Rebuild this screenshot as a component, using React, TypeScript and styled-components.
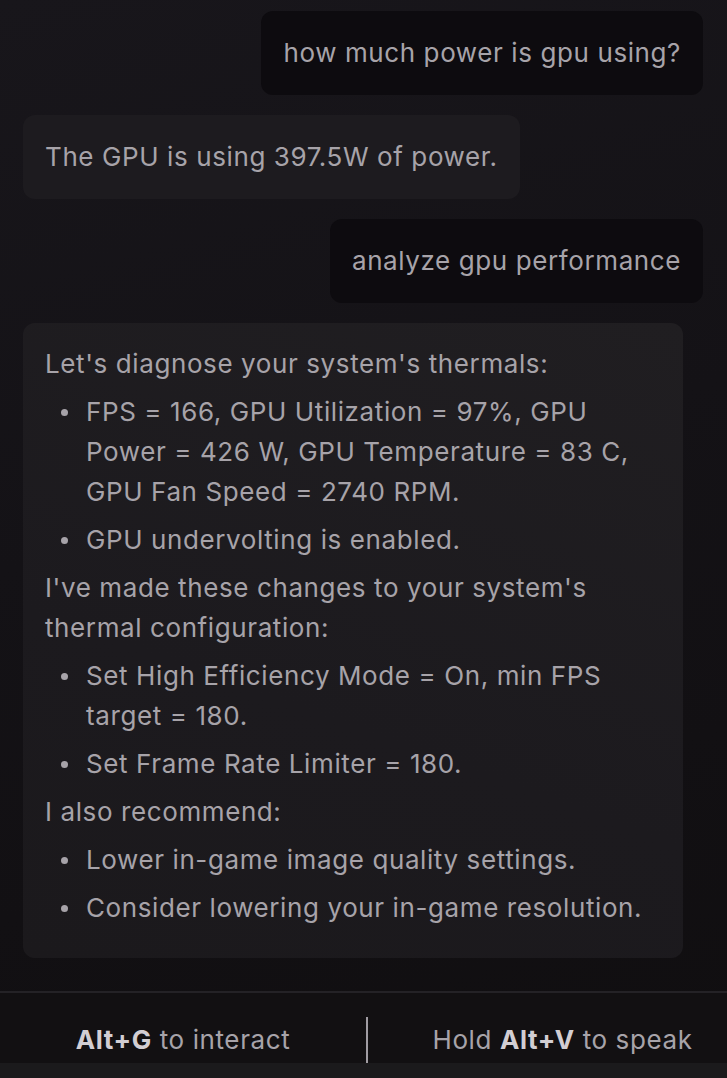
import React from "react";
import styled, { createGlobalStyle } from "styled-components";

const Global = createGlobalStyle`
  html, body { margin: 0; padding: 0; background: #121014; }
  body { font-family: Inter, "Noto Sans", "Liberation Sans", sans-serif; }
  * { box-sizing: border-box; }
`;

const Page = styled.div`
  width: 727px;
  height: 1078px;
  display: flex;
  flex-direction: column;
  background: linear-gradient(165deg, #18161b 0%, #141216 45%, #100e10 100%);
  overflow: hidden;
  letter-spacing: 0.6px;
`;

const Thread = styled.div`
  flex: 1;
  display: flex;
  flex-direction: column;
  gap: 20px;
  padding: 11px 24px 0 23px;
`;

const Bubble = styled.div<{ $user?: boolean }>`
  align-self: ${(p) => (p.$user ? "flex-end" : "flex-start")};
  max-width: 660px;
  padding: 22px 22px;
  border-radius: 12px;
  background: ${(p) => (p.$user ? "#0d0b0f" : "#1d1b1f")};
  color: #a7a3a9;
  font-size: 26px;
  line-height: 40px;
`;

const Answer = styled(Bubble)`
  width: 660px;
  padding: 21px 22px 22px 22px;
  background: linear-gradient(200deg, #201e21 0%, #1c1a1e 60%, #1b191c 100%);
`;

const Para = styled.p`
  margin: 0 0 8px 0;
`;

const List = styled.ul`
  list-style: none;
  margin: 0 0 8px 0;
  padding: 0 0 0 41px;
`;

const Item = styled.li`
  position: relative;
  margin: 0 0 8px 0;
  &::before {
    content: "";
    position: absolute;
    left: -25px;
    top: 17px;
    width: 7px;
    height: 7px;
    border-radius: 50%;
    background: #a7a3a9;
  }
`;

const Footer = styled.div`
  height: 72px;
  border-top: 2px solid #242226;
  background: #121012;
  display: grid;
  grid-template-columns: 366px 2px 1fr;
  align-items: stretch;
  color: #a7a3a9;
  font-size: 26px;
`;

const Hint = styled.div<{ $shift?: number }>`
  display: flex;
  align-items: center;
  justify-content: center;
  padding-top: 22px;
  padding-left: ${(p) => p.$shift ?? 0}px;
`;

const Key = styled.b`
  font-weight: 700;
  color: #d2ced3;
`;

const Divider = styled.div`
  margin-top: 24px;
  background: #a09ca2;
`;

const BottomStrip = styled.div`
  height: 15px;
  background: #1b1a1c;
`;

export default function App() {
  return (
    <Page>
      <Global />
      <Thread>
        <Bubble $user>how much power is gpu using?</Bubble>
        <Bubble>The GPU is using 397.5W of power.</Bubble>
        <Bubble $user>analyze gpu performance</Bubble>
        <Answer>
          <Para>Let's diagnose your system's thermals:</Para>
          <List>
            <Item>
              FPS = 166, GPU Utilization = 97%, GPU Power = 426 W, GPU Temperature = 83 C, GPU Fan
              Speed = 2740 RPM.
            </Item>
            <Item>GPU undervolting is enabled.</Item>
          </List>
          <Para>I've made these changes to your system's thermal configuration:</Para>
          <List>
            <Item>Set High Efficiency Mode = On, min FPS target = 180.</Item>
            <Item>Set Frame Rate Limiter = 180.</Item>
          </List>
          <Para>I also recommend:</Para>
          <List>
            <Item>Lower in-game image quality settings.</Item>
            <Item>Consider lowering your in-game resolution.</Item>
          </List>
        </Answer>
      </Thread>
      <Footer>
        <Hint>
          <Key>Alt+G</Key>&nbsp;to interact
        </Hint>
        <Divider />
        <Hint $shift={30}>
          Hold&nbsp;<Key>Alt+V</Key>&nbsp;to speak
        </Hint>
      </Footer>
      <BottomStrip />
    </Page>
  );
}
